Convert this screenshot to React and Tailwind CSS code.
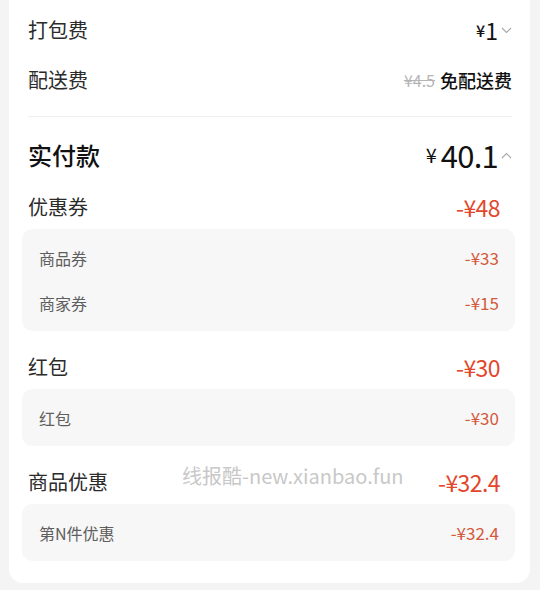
import React from "react";

const font = { fontFamily: '"Noto Sans CJK SC", "Noto Sans", sans-serif' };

const Chevron = ({ up }) => (
    <svg width="11" height="7" viewBox="0 0 11 7" className="ml-[3px]">
        <path
            d={up ? "M1 6L5.5 1.5L10 6" : "M1 1L5.5 5.5L10 1"}
            fill="none"
            stroke="#a8a8a8"
            strokeWidth="1.1"
        />
    </svg>
);

const Section = ({ title, amount, items, first }) => (
    <div className={first ? "" : "mt-[14px]"}>
        <div className="h-[44px] flex items-center justify-between">
            <span className="text-[20px] text-[#2b2b2b]">{title}</span>
            <span className="text-[23px] text-[#e2472c] pr-[12px] tracking-tight">{amount}</span>
        </div>
        <div className="ml-[-6px] mr-[-3px] bg-[#f7f7f7] rounded-[10px] pl-[17px] pr-[16px] py-[6px]">
            {items.map(([label, value]) => (
                <div key={label} className="h-[45px] flex items-center justify-between">
                    <span className="text-[16px] text-[#5e5e5e]">{label}</span>
                    <span className="text-[17px] text-[#d35a3c]">{value}</span>
                </div>
            ))}
        </div>
    </div>
);

export default function App() {
    return (
        <div className="min-h-screen bg-[#f4f4f4] pl-[9px] pr-[10px] pb-[8px]" style={font}>
            <div className="relative bg-white rounded-b-[14px] pl-[19px] pr-[18px] pt-[5px] pb-[22px]">
                <div className="h-[50px] flex items-center justify-between">
                    <span className="text-[20px] text-[#2b2b2b]">打包费</span>
                    <span className="flex items-center text-[#111]">
                        <span className="text-[16px] font-medium">¥</span>
                        <span className="text-[23px]">1</span>
                        <Chevron />
                    </span>
                </div>
                <div className="h-[50px] flex items-center justify-between">
                    <span className="text-[20px] text-[#2b2b2b]">配送费</span>
                    <span className="flex items-center gap-[5px]">
                        <span className="text-[16px] text-[#b5b5b5] line-through">¥4.5</span>
                        <span className="text-[18px] text-[#111] font-medium">免配送费</span>
                    </span>
                </div>
                <div className="mt-[11px] h-px bg-[#eeeeee]"></div>

                <div className="mt-[8px] h-[60px] flex items-center justify-between">
                    <span className="text-[24px] font-medium text-[#111]">实付款</span>
                    <span className="flex items-center text-[#111]">
                        <span className="text-[20px] mr-[4px]">¥</span>
                        <span className="text-[31px] tracking-tight">40.1</span>
                        <Chevron up />
                    </span>
                </div>

                <Section first title="优惠券" amount="-¥48" items={[["商品券", "-¥33"], ["商家券", "-¥15"]]} />
                <Section title="红包" amount="-¥30" items={[["红包", "-¥30"]]} />
                <Section title="商品优惠" amount="-¥32.4" items={[["第N件优惠", "-¥32.4"]]} />

                <div className="absolute left-[173px] top-[462px] text-[20px] leading-[28px] text-[#c8c8c8] pointer-events-none">
                    线报酷-new.xianbao.fun
                </div>
            </div>
        </div>
    );
}
